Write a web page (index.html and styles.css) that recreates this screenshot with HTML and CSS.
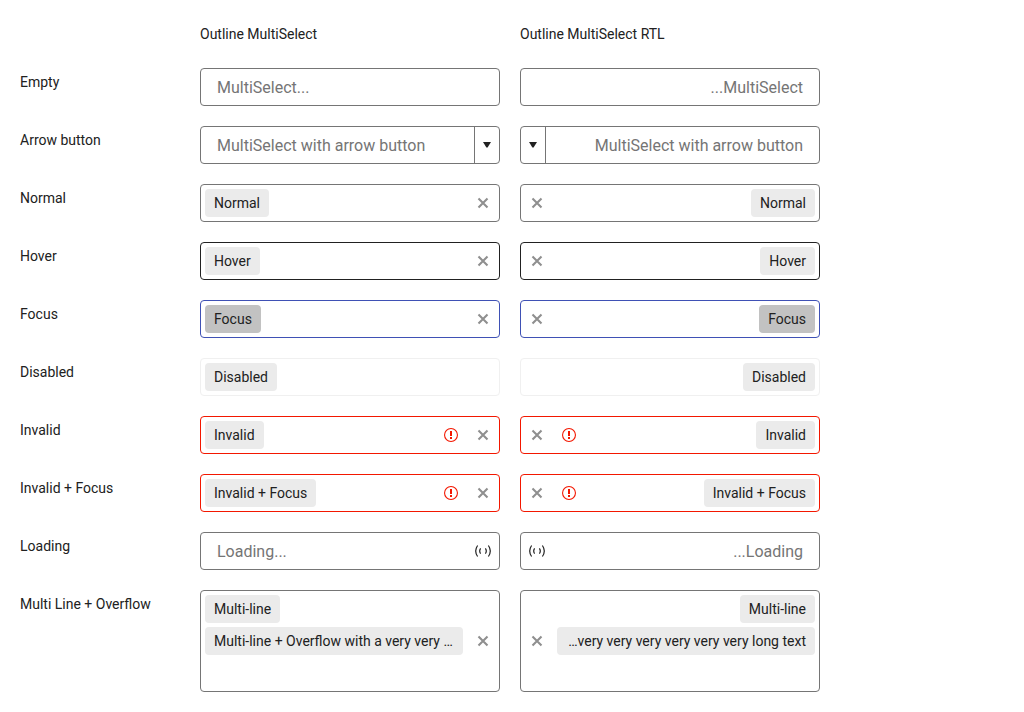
FILE: index.html
```
<!DOCTYPE html>
<html lang="en">
<head>
<meta charset="utf-8">
<title>Outline MultiSelect</title>
<link rel="stylesheet" href="styles.css">
</head>
<body>
<svg class="sprite" aria-hidden="true">
  <symbol id="clear" viewBox="0 0 16 16"><path d="M3.5 3.5L12.5 12.5M12.5 3.5L3.5 12.5" stroke="currentColor" stroke-width="2.1" fill="none"/></symbol>
  <symbol id="warn" viewBox="0 0 16 16"><circle cx="8" cy="8" r="6.45" fill="none" stroke="currentColor" stroke-width="1.1"/><path d="M7 4h2v5H7zM7 10h2v2H7z" fill="currentColor"/></symbol>
  <symbol id="load" viewBox="0 0 16 16"><path d="M2.6 2.5Q-1.2 8 2.6 13.5M13.4 2.5Q17.2 8 13.4 13.5M5.6 5.4Q3.8 8 5.6 10.6M10.4 5.4Q12.2 8 10.4 10.6" fill="none" stroke="currentColor" stroke-width="1.2"/></symbol>
  <symbol id="arrow" viewBox="0 0 8 6"><path d="M0 0h8L4.6 5.5H3.4z" fill="currentColor"/></symbol>
</svg>
<main class="demo">
  <div></div><h2 class="title">Outline MultiSelect</h2><h2 class="title">Outline MultiSelect RTL</h2>

  <div class="label">Empty</div>
  <div class="field"><span class="placeholder">MultiSelect...</span></div>
  <div class="field reverse"><span class="placeholder">...MultiSelect</span></div>

  <div class="label">Arrow button</div>
  <div class="field"><span class="placeholder">MultiSelect with arrow button</span><span class="drop"><svg class="arrow"><use href="#arrow"/></svg></span></div>
  <div class="field reverse"><span class="placeholder">MultiSelect with arrow button</span><span class="drop"><svg class="arrow"><use href="#arrow"/></svg></span></div>

  <div class="label">Normal</div>
  <div class="field"><span class="tag">Normal</span><svg class="icon clear"><use href="#clear"/></svg></div>
  <div class="field reverse"><span class="tag">Normal</span><svg class="icon clear"><use href="#clear"/></svg></div>

  <div class="label">Hover</div>
  <div class="field hover"><span class="tag">Hover</span><svg class="icon clear"><use href="#clear"/></svg></div>
  <div class="field hover reverse"><span class="tag">Hover</span><svg class="icon clear"><use href="#clear"/></svg></div>

  <div class="label">Focus</div>
  <div class="field focus"><span class="tag">Focus</span><svg class="icon clear"><use href="#clear"/></svg></div>
  <div class="field focus reverse"><span class="tag">Focus</span><svg class="icon clear"><use href="#clear"/></svg></div>

  <div class="label">Disabled</div>
  <div class="field disabled"><span class="tag">Disabled</span></div>
  <div class="field disabled reverse"><span class="tag">Disabled</span></div>

  <div class="label">Invalid</div>
  <div class="field invalid"><span class="tag">Invalid</span><svg class="icon warn"><use href="#warn"/></svg><svg class="icon clear"><use href="#clear"/></svg></div>
  <div class="field invalid reverse"><span class="tag">Invalid</span><svg class="icon warn"><use href="#warn"/></svg><svg class="icon clear"><use href="#clear"/></svg></div>

  <div class="label">Invalid + Focus</div>
  <div class="field invalid"><span class="tag">Invalid + Focus</span><svg class="icon warn"><use href="#warn"/></svg><svg class="icon clear"><use href="#clear"/></svg></div>
  <div class="field invalid reverse"><span class="tag">Invalid + Focus</span><svg class="icon warn"><use href="#warn"/></svg><svg class="icon clear"><use href="#clear"/></svg></div>

  <div class="label">Loading</div>
  <div class="field"><span class="placeholder">Loading...</span><svg class="icon"><use href="#load"/></svg></div>
  <div class="field reverse"><span class="placeholder">...Loading</span><svg class="icon"><use href="#load"/></svg></div>

  <div class="label">Multi Line + Overflow</div>
  <div class="field multi"><div class="tags"><span class="tag">Multi-line</span><span class="tag wide">Multi-line + Overflow with a very very …</span></div><svg class="icon clear"><use href="#clear"/></svg></div>
  <div class="field multi reverse"><div class="tags"><span class="tag">Multi-line</span><span class="tag wide">…very very very very very very long text</span></div><svg class="icon clear"><use href="#clear"/></svg></div>
</main>
</body>
</html>
```
FILE: styles.css
```
* {
  box-sizing: border-box;
}

body {
  margin: 0;
  background: #fff;
  color: #212121;
  font: 14px/20px Roboto, sans-serif;
}

.sprite {
  display: none;
}

.demo {
  display: grid;
  grid-template-columns: 160px 300px 300px;
  gap: 20px;
  padding: 24px 20px 20px;
}

.title {
  height: 24px;
  margin: 0;
  font-size: 14px;
  font-weight: 400;
}

.label {
  padding-top: 4px;
  white-space: nowrap;
}

.field {
  display: flex;
  align-items: center;
  height: 38px;
  border: 1px solid #757575;
  border-radius: 4px;
}

.reverse {
  flex-direction: row-reverse;
}

.placeholder {
  flex: 1;
  padding: 2px 16px 0;
  color: #757575;
  font-size: 16px;
  white-space: nowrap;
}

.reverse .placeholder {
  text-align: right;
}

.drop {
  display: flex;
  align-items: center;
  justify-content: center;
  align-self: stretch;
  width: 25px;
  border-left: 1px solid #757575;
}

.reverse .drop {
  border-left: 0;
  border-right: 1px solid #757575;
}

.arrow {
  width: 8px;
  height: 6px;
}

.tag {
  height: 28px;
  margin: 0 4px;
  padding: 0 9px;
  border-radius: 4px;
  background: #ebebeb;
  line-height: 28px;
  white-space: nowrap;
}

.tag ~ .icon:nth-child(2),
.tags + .icon {
  margin-inline-start: auto;
}

.icon {
  flex: none;
  width: 16px;
  height: 16px;
  margin: 0 8px;
}

.field.reverse .tag + .icon {
  margin-left: 8px;
  margin-right: auto;
}

.warn {
  color: #f31700;
}

.field .warn + .clear {
  margin-left: 16px;
}

.field.reverse .warn + .clear {
  margin-left: 8px;
  margin-right: 16px;
}

.field.reverse .tag + .warn {
  margin-left: 0;
}

.field:not(.reverse) > .tag + .warn {
  margin-right: 0;
}

.clear {
  color: #8f8f8f;
}

.hover {
  border-color: #212121;
}

.focus {
  border-color: #3f51b5;
}

.focus .tag {
  background: #c2c2c2;
}

.disabled {
  border-color: #f0f0f0;
}

.invalid {
  border-color: #f31700;
}

.multi {
  height: 102px;
}

.tags {
  display: flex;
  flex-direction: column;
  align-items: flex-start;
  align-self: flex-start;
  gap: 4px;
  padding-top: 4px;
}

.reverse .tags {
  align-items: flex-end;
}

.wide {
  width: 258px;
}

.reverse .wide {
  text-align: right;
}

.multi.reverse .icon {
  margin-inline: 8px auto;
}
```
